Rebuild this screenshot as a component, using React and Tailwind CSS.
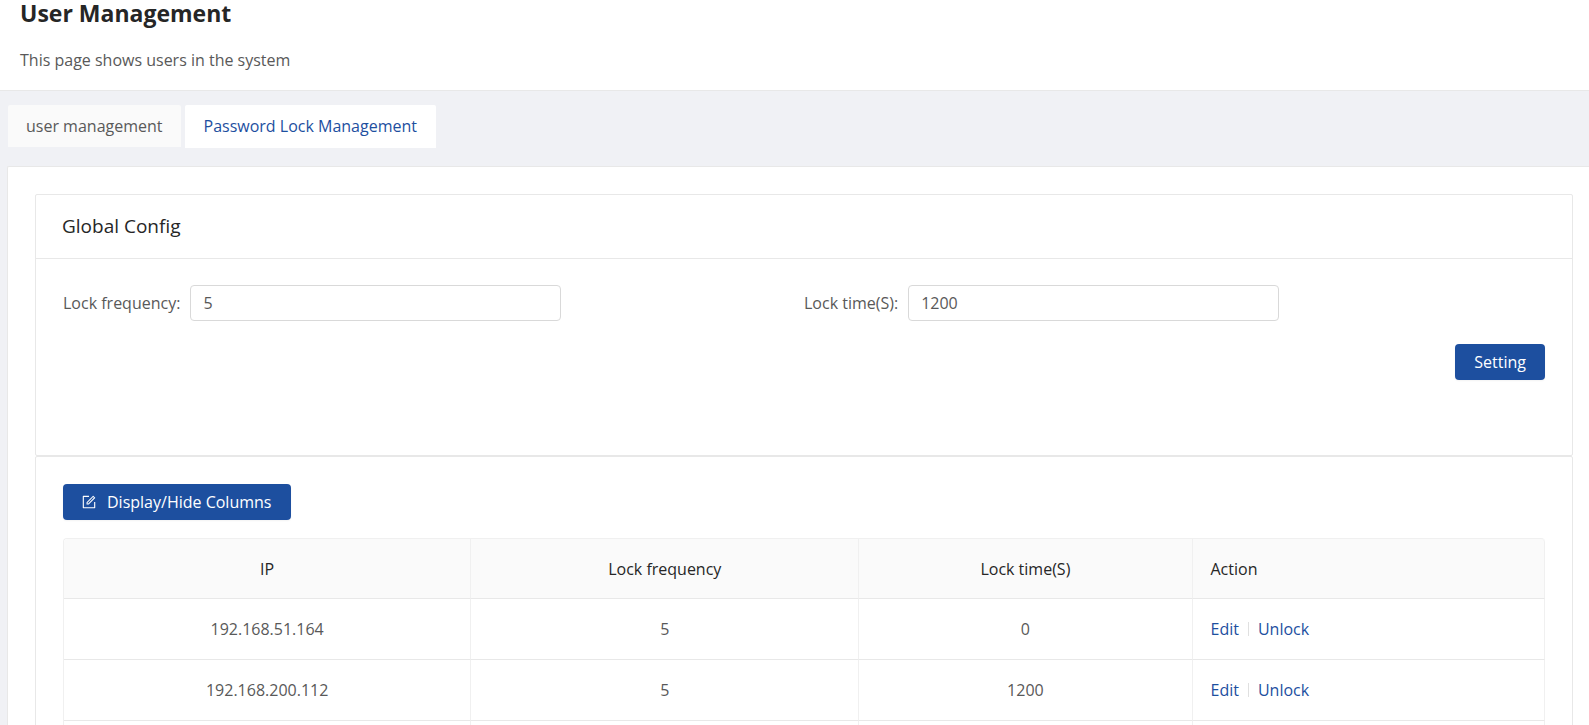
import React, { useState } from "react";
import { AiOutlineForm } from "react-icons/ai";

const tabs = ["user management", "Password Lock Management"];

const rows = [
  { ip: "192.168.51.164", frequency: 5, time: 0 },
  { ip: "192.168.200.112", frequency: 5, time: 1200 },
  { ip: "", frequency: "", time: "" },
];

function Field({ id, label, value, onChange }) {
  return (
    <div className="flex w-1/2 items-center">
      <label htmlFor={id} className="mr-[10px] whitespace-nowrap">
        {label}:
      </label>
      <input
        id={id}
        type="text"
        value={value}
        onChange={(e) => onChange(e.target.value)}
        className="h-9 w-1/2 rounded border border-[#d9d9d9] bg-white px-3 outline-none focus:border-[#1d4f9f]"
      />
    </div>
  );
}

function LockTable() {
  return (
    <table className="mt-[18px] w-full table-fixed border-separate border-spacing-0 rounded-t border-t border-l border-[#f0f0f0]">
      <colgroup>
        <col className="w-[27.5%]" />
        <col className="w-[26.2%]" />
        <col className="w-[22.5%]" />
        <col />
      </colgroup>
      <thead className="bg-[#fafafa] text-[#262626]">
        <tr className="h-[60px]">
          <th className="rounded-tl border-r border-b border-r-[#f0f0f0] border-b-[#e8e8e8] px-[18px] font-normal">IP</th>
          <th className="border-r border-b border-r-[#f0f0f0] border-b-[#e8e8e8] px-[18px] font-normal">Lock frequency</th>
          <th className="border-r border-b border-r-[#f0f0f0] border-b-[#e8e8e8] px-[18px] font-normal">Lock time(S)</th>
          <th className="rounded-tr border-r border-b border-r-[#f0f0f0] border-b-[#e8e8e8] px-[18px] text-left font-normal">Action</th>
        </tr>
      </thead>
      <tbody className="text-center">
        {rows.map((row, i) => (
          <tr key={i} className="h-[61px]">
            <td className="border-r border-b border-r-[#f0f0f0] border-b-[#e8e8e8] px-[18px]">{row.ip}</td>
            <td className="border-r border-b border-r-[#f0f0f0] border-b-[#e8e8e8] px-[18px]">{row.frequency}</td>
            <td className="border-r border-b border-r-[#f0f0f0] border-b-[#e8e8e8] px-[18px]">{row.time}</td>
            <td className="border-r border-b border-r-[#f0f0f0] border-b-[#e8e8e8] px-[18px]">
              {row.ip && (
                <div className="flex items-center text-[#1d4f9f]">
                  <a href="#edit">Edit</a>
                  <span className="mx-[9px] h-[14px] w-px bg-[#e0e0e0]" />
                  <a href="#unlock">Unlock</a>
                </div>
              )}
            </td>
          </tr>
        ))}
      </tbody>
    </table>
  );
}

export default function App() {
  const [active, setActive] = useState(1);
  const [frequency, setFrequency] = useState("5");
  const [time, setTime] = useState("1200");

  return (
    <div className="min-h-screen bg-[#f0f1f5] font-['Open_Sans','Noto_Sans',sans-serif] text-base text-[#595959]">
      <header className="border-b border-[#e8e8e8] bg-white px-5 pb-[18px]">
        <h1 className="text-[23px] leading-[26px] font-bold text-[#262626]">User Management</h1>
        <p className="mt-[22px] leading-6">This page shows users in the system</p>
      </header>

      {/* tabs */}
      <nav className="flex items-start gap-1 px-2 pt-[14px] pb-[18px]">
        {tabs.map((tab, i) => (
          <button
            key={tab}
            type="button"
            onClick={() => setActive(i)}
            className={
              i === active
                ? "h-[43px] rounded-t-xs bg-white px-[19px] pb-px text-[#1d4f9f]"
                : "h-[42px] rounded-t-xs bg-[#fafafa] px-[18px]"
            }
          >
            {tab}
          </button>
        ))}
      </nav>

      <main className="ml-[7px] rounded-tl-xs border-t border-l border-[#e8e8e8] bg-white pt-[27px] pr-4 pl-[27px]">
        {/* global config */}
        <section className="rounded-xs border border-[#e8e8e8]">
          <h2 className="border-b border-[#e8e8e8] px-[26px] py-[18px] text-[19px] leading-[27px] text-[#262626]">Global Config</h2>
          <div className="px-[27px] pt-[26px] pb-[75px]">
            <div className="flex">
              <Field id="lock-frequency" label="Lock frequency" value={frequency} onChange={setFrequency} />
              <Field id="lock-time" label="Lock time(S)" value={time} onChange={setTime} />
            </div>
            <div className="mt-[23px] flex justify-end">
              <button type="button" className="h-9 rounded bg-[#1d4f9f] px-[19px] text-white shadow-xs">
                Setting
              </button>
            </div>
          </div>
        </section>

        {/* locked addresses */}
        <section className="rounded-xs border border-[#e8e8e8] px-[27px] py-[27px]">
          <button type="button" className="flex h-9 items-center rounded bg-[#1d4f9f] pr-5 pl-[18px] text-white shadow-xs">
            <AiOutlineForm className="mr-[10px] size-4" />
            Display/Hide Columns
          </button>
          <LockTable />
        </section>
      </main>
    </div>
  );
}
